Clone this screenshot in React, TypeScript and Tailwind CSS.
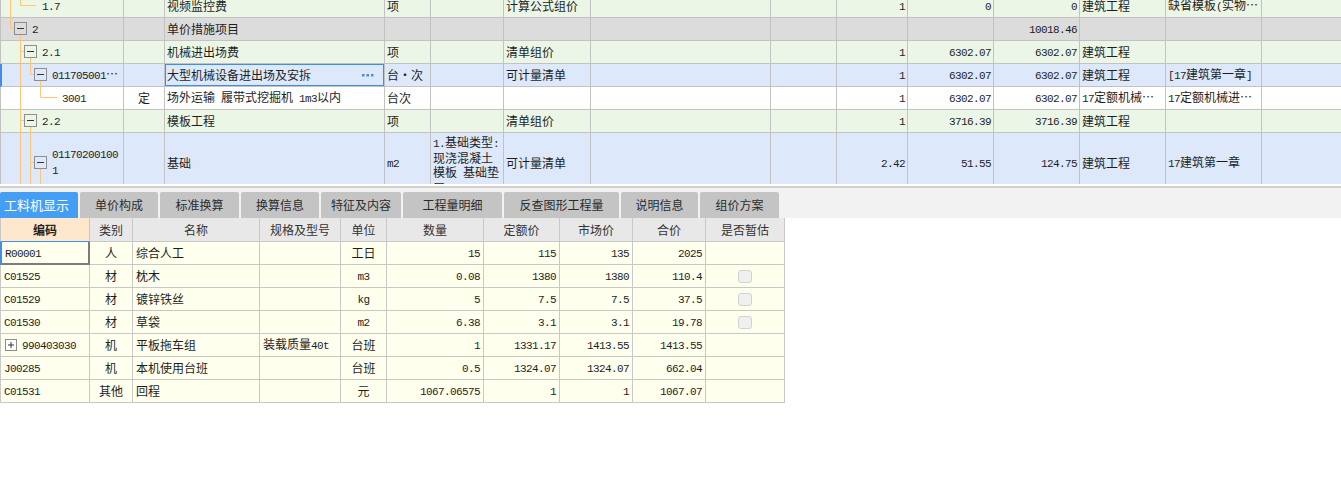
import React from "react";

const MONO = "font-['Liberation_Mono'] text-[11px] tracking-[-0.6px]";

// ascii runs get the narrow mono face, the rest stays in the CJK face
const Mix = ({ text }: { text: string }) => {
  const parts = text.split(/([\x20-\x7e]+)/).filter(Boolean);
  return (
    <span className="whitespace-pre-wrap">
      {parts.map((p, i) =>
        /^[\x20-\x7e]+$/.test(p) ? (
          <span key={i} className={MONO}>
            {p}
          </span>
        ) : (
          <span key={i}>{p}</span>
        )
      )}
    </span>
  );
};

const TOP_COLS = [
  "w-[124px]", "w-[41px]", "w-[220px]", "w-[46px]", "w-[73px]", "w-[87px]", "w-[180px]",
  "w-[66px]", "w-[71px]", "w-[86px]", "w-[86px]", "w-[86px]", "w-[96px]", "flex-1",
];
const TOP_ALIGN = ["l", "c", "l", "l", "l", "l", "l", "l", "r", "r", "r", "l", "l", "l"];

type TopRow = { bg: string; h: string; pl: string; cells: string[]; sel?: boolean; tall?: boolean };

const TOP_ROWS: TopRow[] = [
  { bg: "bg-[#ecf6e6]", h: "h-[23px]", pl: "pl-[41px]", cells: ["1.7", "", "视频监控费", "项", "", "计算公式组价", "", "", "1", "0", "0", "建筑工程", "缺省模板(实物…", ""] },
  { bg: "bg-[#dcdcdc]", h: "h-[23px]", pl: "pl-[31px]", cells: ["2", "", "单价措施项目", "", "", "", "", "", "", "", "10018.46", "", "", ""] },
  { bg: "bg-[#ecf6e6]", h: "h-[23px]", pl: "pl-[41px]", cells: ["2.1", "", "机械进出场费", "项", "", "清单组价", "", "", "1", "6302.07", "6302.07", "建筑工程", "", ""] },
  { bg: "bg-[#dde9fb]", h: "h-[23px]", pl: "pl-[50px]", sel: true, cells: ["011705001…", "", "大型机械设备进出场及安拆", "台・次", "", "可计量清单", "", "", "1", "6302.07", "6302.07", "建筑工程", "[17建筑第一章]", ""] },
  { bg: "bg-white", h: "h-[23px]", pl: "pl-[61px]", cells: ["3001", "定", "场外运输 履带式挖掘机 1m3以内", "台次", "", "", "", "", "1", "6302.07", "6302.07", "17定额机械…", "17定额机械进…", ""] },
  { bg: "bg-[#ecf6e6]", h: "h-[23px]", pl: "pl-[41px]", cells: ["2.2", "", "模板工程", "项", "", "清单组价", "", "", "1", "3716.39", "3716.39", "建筑工程", "", ""] },
  { bg: "bg-[#dde9fb]", h: "h-[60px]", pl: "pl-[51px]", tall: true, cells: ["011702001001", "", "基础", "m2", "1.基础类型:现浇混凝土模板 基础垫层", "可计量清单", "", "", "2.42", "51.55", "124.75", "建筑工程", "17建筑第一章", ""] },
];

const BOXES: [number, number][] = [[14, 22], [24, 45], [34, 68], [24, 114], [34, 156]];

const TreeLines = () => (
  <svg className="absolute left-0 top-0 pointer-events-none" width="124" height="184">
    <path
      d="M10.5 0V28.5H14 M20.5 0V5.5H36 M20.5 35V184 M20.5 51.5H24 M20.5 120.5H24 M30.5 58V74.5H34 M40.5 81V97.5H57 M30.5 127V184 M30.5 162.5H34 M40.5 169V184"
      stroke="#ffc67a"
      fill="none"
    />
    {BOXES.map(([x, y]) => (
      <g key={`${x}-${y}`}>
        <rect x={x + 0.5} y={y + 0.5} width="12" height="12" fill="none" stroke="#8e8e8e" />
        <path d={`M${x + 3} ${y + 6.5}H${x + 10}`} stroke="#333" />
      </g>
    ))}
  </svg>
);

const TopTable = () => (
  <div className="relative h-[184px] overflow-hidden">
    <div className="mt-[-5px]">
      {TOP_ROWS.map((r, ri) => (
        <div key={ri} className={`flex ${r.h} ${r.bg}`}>
          {r.cells.map((c, ci) => {
            const align = TOP_ALIGN[ci];
            let cls = `${TOP_COLS[ci]} shrink-0 flex border-r border-b border-[#c2c2c2] overflow-hidden leading-[14px]`;
            if (ci === 13) cls = `flex-1 flex border-b border-[#c2c2c2]`;
            if (align === "r") cls += " justify-end pr-[2px]";
            else if (align === "c") cls += " justify-center";
            else if (ci > 0) cls += " pl-[2px]";
            if (ci === 0) {
              cls += ` ${r.pl}`;
              cls += r.sel ? " border-l-2 border-l-[#3f8fe6]" : " border-l border-l-[#c2c2c2]";
            }
            if (r.tall && ci === 4) {
              return (
                <div key={ci} className={`${cls} items-start pt-[2px]`}>
                  <div>
                    <Mix text={c} />
                  </div>
                </div>
              );
            }
            if (r.tall && ci === 0) {
              return (
                <div key={ci} className={`${cls} items-center`}>
                  <div className={`${MONO} break-all leading-[16px] pr-[2px]`}>{c}</div>
                </div>
              );
            }
            if (r.sel && ci === 2) {
              return (
                <div key={ci} className={`${cls} relative items-center whitespace-nowrap`}>
                  <Mix text={c} />
                  <div className="absolute inset-[-1px] border-2 border-[#3f8fe6] flex items-center justify-end pr-[9px]">
                    <svg width="12" height="3">
                      <rect x="0" y="0" width="2.5" height="2.5" fill="#3f8fe6" />
                      <rect x="4.5" y="0" width="2.5" height="2.5" fill="#3f8fe6" />
                      <rect x="9" y="0" width="2.5" height="2.5" fill="#3f8fe6" />
                    </svg>
                  </div>
                </div>
              );
            }
            return (
              <div key={ci} className={`${cls} items-center whitespace-nowrap`}>
                <Mix text={c} />
              </div>
            );
          })}
        </div>
      ))}
    </div>
    <TreeLines />
  </div>
);

const TABS: [string, string][] = [
  ["工料机显示", "w-[78px]"],
  ["单价构成", "w-[78px]"],
  ["标准换算", "w-[79px]"],
  ["换算信息", "w-[78px]"],
  ["特征及内容", "w-[80px]"],
  ["工程量明细", "w-[99px]"],
  ["反查图形工程量", "w-[115px]"],
  ["说明信息", "w-[77px]"],
  ["组价方案", "w-[79px]"],
];

const BOT_COLS = ["w-[90px]", "w-[43px]", "w-[127px]", "w-[81px]", "w-[46px]", "w-[97px]", "w-[76px]", "w-[73px]", "w-[73px]", "w-[79px]"];
const BOT_ALIGN = ["l", "c", "l", "l", "c", "r", "r", "r", "r", "c"];
const HEADERS = ["编码", "类别", "名称", "规格及型号", "单位", "数量", "定额价", "市场价", "合价", "是否暂估"];

const BOT_ROWS: { cells: string[]; cb?: boolean; plus?: boolean }[] = [
  { cells: ["R00001", "人", "综合人工", "", "工日", "15", "115", "135", "2025", ""] },
  { cells: ["C01525", "材", "枕木", "", "m3", "0.08", "1380", "1380", "110.4", ""], cb: true },
  { cells: ["C01529", "材", "镀锌铁丝", "", "kg", "5", "7.5", "7.5", "37.5", ""], cb: true },
  { cells: ["C01530", "材", "草袋", "", "m2", "6.38", "3.1", "3.1", "19.78", ""], cb: true },
  { cells: ["990403030", "机", "平板拖车组", "装载质量40t", "台班", "1", "1331.17", "1413.55", "1413.55", ""], plus: true },
  { cells: ["J00285", "机", "本机使用台班", "", "台班", "0.5", "1324.07", "1324.07", "662.04", ""] },
  { cells: ["C01531", "其他", "回程", "", "元", "1067.06575", "1", "1", "1067.07", ""] },
];

const BottomTable = () => (
  <div className="w-[785px]">
    <div className="flex h-[24px] bg-[#e8e8e8] text-[#333]">
      {HEADERS.map((h, i) => (
        <div
          key={h}
          className={`${BOT_COLS[i]} shrink-0 flex items-center justify-center border-r border-b ${
            i === 0
              ? "bg-[#fde8cd] font-bold text-[#222] border-b-[#3f8fe6] border-l border-l-[#c8c8c8] border-r-[#c8c8c8]"
              : "border-[#c8c8c8]"
          }`}
        >
          {h}
        </div>
      ))}
    </div>
    {BOT_ROWS.map((r, ri) => (
      <div key={ri} className="flex h-[23px] bg-[#ffffee]">
        {r.cells.map((c, ci) => {
          const align = BOT_ALIGN[ci];
          let cls = `${BOT_COLS[ci]} shrink-0 flex items-center whitespace-nowrap overflow-hidden border-r border-b border-[#c8c8c8]`;
          if (align === "r") cls += " justify-end pr-[3px]";
          else if (align === "c") cls += " justify-center";
          else cls += " pl-[3px]";
          if (ci === 0) {
            cls +=
              ri === 0
                ? " border-l-2 border-l-[#3f8fe6] border-r-2 border-r-[#7c7c7c] border-b-2 border-b-[#7c7c7c]"
                : " border-l border-l-[#c8c8c8]";
          }
          return (
            <div key={ci} className={cls}>
              {ci === 0 && r.plus && (
                <svg width="12" height="12" className="mr-[5px] ml-[1px] shrink-0">
                  <rect x="0.5" y="0.5" width="11" height="11" fill="#fff" stroke="#8e8e8e" />
                  <path d="M3 6H9 M6 3V9" stroke="#333" />
                </svg>
              )}
              {ci === 9 && r.cb ? (
                <span className="w-[14px] h-[13px] rounded-[3px] border border-[#d2d2d2] bg-[#f0f0f0]" />
              ) : (
                <Mix text={c} />
              )}
            </div>
          );
        })}
      </div>
    ))}
  </div>
);

export default function App() {
  return (
    <div className="w-[1341px] h-[486px] overflow-hidden bg-white text-[12px] text-[#1e1e1e] font-['Noto_Sans_CJK_SC']">
      <TopTable />
      <div className="h-[2px]" />
      <div className="h-[2px] bg-[#d0d0d0]" />
      <div className="h-[30px] bg-[#f2f2f2] pt-[4px] flex gap-[2px]">
        {TABS.map(([t, w], i) => (
          <div
            key={t}
            className={`${w} h-[26px] rounded-t-[2px] flex items-center ${
              i === 0 ? "bg-[#449ff4] text-white justify-start pl-[4px] text-[13px]" : "bg-[#c4c4c4] text-[#2b2b2b] justify-center"
            }`}
          >
            {t}
          </div>
        ))}
      </div>
      <BottomTable />
    </div>
  );
}
